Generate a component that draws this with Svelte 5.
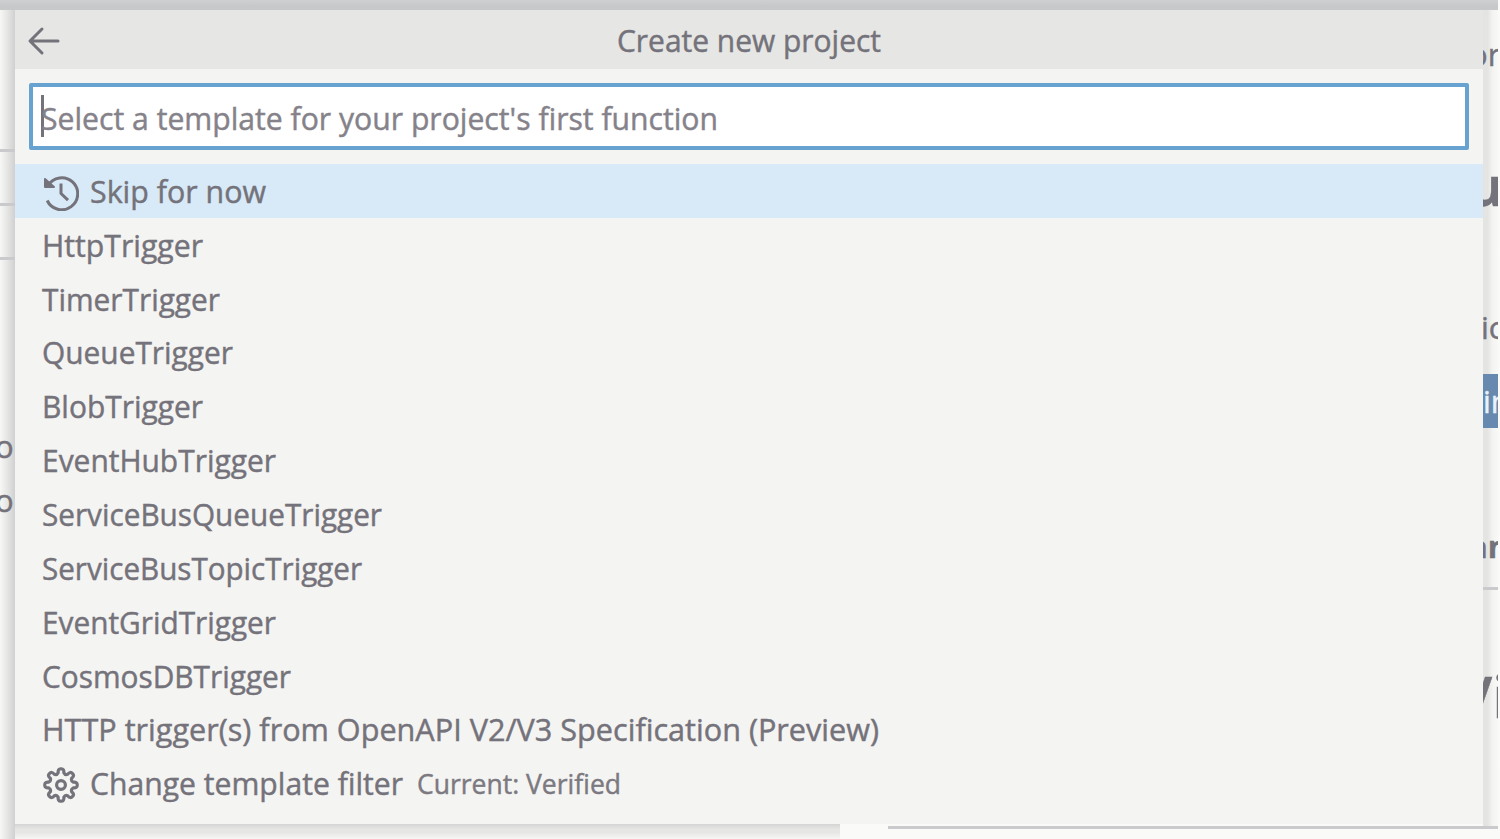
<script>
  const items = [
    { label: 'Skip for now', width: 176, icon: 'history' },
    { label: 'HttpTrigger', width: 161 },
    { label: 'TimerTrigger', width: 178 },
    { label: 'QueueTrigger', width: 191 },
    { label: 'BlobTrigger', width: 161 },
    { label: 'EventHubTrigger', width: 234 },
    { label: 'ServiceBusQueueTrigger', width: 340 },
    { label: 'ServiceBusTopicTrigger', width: 320 },
    { label: 'EventGridTrigger', width: 234 },
    { label: 'CosmosDBTrigger', width: 249 },
    { label: 'HTTP trigger(s) from OpenAPI V2/V3 Specification (Preview)', width: 837 },
    { label: 'Change template filter', width: 313, icon: 'gear', note: 'Current: Verified' }
  ];

  const gear = Array.from({ length: 8 }, (_, i) => {
    const p = (r, deg) => {
      const a = ((i * 45 + deg - 90) * Math.PI) / 180;
      return `${(18 + r * Math.cos(a)).toFixed(2)} ${(18 + r * Math.sin(a)).toFixed(2)}`;
    };
    return `${i ? 'L' : 'M'}${p(12.6, -13)} Q${p(16.8, -11)} ${p(16.2, 0)} Q${p(16.8, 11)} ${p(12.6, 13)} Q${p(10.6, 22.5)} ${p(12.6, 32)}`;
  }).join(' ') + 'Z';

  // Condenses a label to its column width, keeping the left edge fixed.
  function fit(node, width) {
    const natural = node.getBoundingClientRect().width;
    node.style.transform = `scaleX(${width / natural})`;
    node.style.marginRight = `${width - natural}px`;
  }
</script>

<div class="page">
  <div class="titlebar"></div>
  <div class="shade left"></div>
  <div class="shade right"></div>
  <div class="shade bottom"></div>
  <i class="rule" style="top:149px"></i>
  <i class="rule" style="top:203px"></i>
  <i class="rule" style="top:257px"></i>
  <i class="rule far" style="top:587px"></i>
  <i class="rule base"></i>
  <div class="slice start" style="top:424px"><span>o</span></div>
  <div class="slice start" style="top:478px"><span>o</span></div>
  <div class="slice end" style="top:32px"><span style="margin-left:-14px">or</span></div>
  <div class="slice end big" style="top:155px"><span style="margin-left:-15px">u</span></div>
  <div class="slice end" style="top:305px"><span style="margin-left:-2px">ic</span></div>
  <div class="slice end chip" style="top:374px"><span>in</span></div>
  <div class="slice end semi" style="top:524px"><span style="margin-left:-14px">an</span></div>
  <div class="slice end tall" style="top:664px"><span style="margin-left:-27px">Vi</span></div>

  <section class="picker">
    <header>
      <svg class="back" viewBox="0 0 34 30" width="34" height="30"><path d="M15 3 3 15 15 27M3.5 15H31" /></svg>
      <h1><span class="fit" use:fit={264}>Create new project</span></h1>
    </header>
    <div class="field">
      <i class="caret"></i>
      <span class="fit" use:fit={677}>Select a template for your project's first function</span>
    </div>
    <ul>
      {#each items as item, i}
        <li class:active={i === 0}>
          {#if item.icon === 'history'}
            <svg class="icon" viewBox="0 0 36 36" width="36" height="36">
              <path d="M5 10.5A16 16 0 1 1 4.2 25.5M18 8.5V18.5L25 25.2" />
              <path class="tip" d="M2 4V12H11Z" />
            </svg>
          {:else if item.icon === 'gear'}
            <svg class="icon gear" viewBox="0 0 36 36" width="36" height="36">
              <path d={gear} /><circle cx="18" cy="18" r="4.4" />
            </svg>
          {/if}
          <span class="fit" use:fit={item.width}>{item.label}</span>
          {#if item.note}<small><span class="fit" use:fit={204}>{item.note}</span></small>{/if}
        </li>
      {/each}
    </ul>
  </section>
</div>

<style>
  :global(body) { margin: 0; background: #fff; }
  .page {
    position: relative;
    box-sizing: border-box;
    width: 1500px;
    height: 839px;
    padding: 10px 0 0 15px;
    overflow: hidden;
    background: #fafaf9;
    color: #74727a;
    font-family: "Open Sans", "Noto Sans", sans-serif;
    font-size: 31px;
    line-height: 44px;
    -webkit-text-stroke: 0.45px currentColor;
  }
  .titlebar { position: absolute; inset: 0 2px auto 0; height: 10px; background: linear-gradient(#cfd0d1, #c7c8ca 60%); }
  .shade { position: absolute; }
  .left { left: 0; top: 10px; width: 15px; bottom: 0; background: linear-gradient(90deg, #f7f7f6, #e7e7e5 45%, #d0d0d1); }
  .right { left: 1483px; top: 10px; width: 15px; bottom: 10px; background: linear-gradient(90deg, #e4e4e3 30%, #f4f4f3 65%, #f8f8f7); }
  .bottom { left: 15px; top: 824px; width: 825px; height: 15px; background: linear-gradient(#d4d4d4, #e6e6e4 35%, #e6e6e4 55%, #f6f6f5); }
  .rule { position: absolute; left: 0; width: 15px; height: 3px; background: #cacacc; }
  .rule.far { left: 1483px; }
  .rule.base { left: 888px; top: 826px; width: 610px; }
  .slice { position: absolute; height: 44px; overflow: hidden; white-space: nowrap; }
  .slice.start { left: 0; width: 15px; }
  .start span { margin-left: -5px; }
  .slice.end { left: 1483px; width: 15px; }
  .slice.big { height: 60px; font-size: 54px; font-weight: 700; line-height: 60px; }
  .slice.semi { font-weight: 700; }
  .slice.tall { height: 64px; font-size: 58px; font-weight: 600; line-height: 64px; }
  .slice.chip { height: 54px; line-height: 54px; background: #6889af; color: #eaf2f9; }

  .picker { position: relative; width: 1468px; height: 814px; background: #f4f4f2; }
  header { display: flex; align-items: center; height: 59px; background: #e6e6e4; }
  .back { flex: none; margin-left: 12px; margin-top: 2px; }
  svg { fill: none; stroke: #74727a; stroke-width: 3; stroke-linejoin: round; }
  .back { stroke-linecap: round; }
  .tip { fill: #74727a; stroke-width: 2; }
  h1 { margin: 0 0 0 556px; font: inherit; }
  .fit { display: inline-block; transform-origin: 0 50%; white-space: pre; }
  .field {
    position: relative;
    display: flex;
    align-items: center;
    box-sizing: border-box;
    width: 1440px;
    height: 67px;
    margin: 14px 0 0 14px;
    padding: 2px 0 0 8px;
    border: 4px solid #68a2d0;
    border-radius: 2px;
    background: #fff;
    color: #85828a;
  }
  .caret { position: absolute; left: 8px; top: 8px; width: 3px; height: 42px; background: #74727a; }
  ul { margin: 14px 0 0; padding: 0; list-style: none; }
  li { display: flex; align-items: center; box-sizing: border-box; height: 53.85px; padding: 0 0 0 27px; }
  li.active { background: #d8eaf8; }
  .icon { flex: none; margin: 4px 11px 0 1px; }
  .gear { stroke-width: 3.2; }
  small { margin-left: 14px; font-size: 28px; color: #7c7981; }
</style>
